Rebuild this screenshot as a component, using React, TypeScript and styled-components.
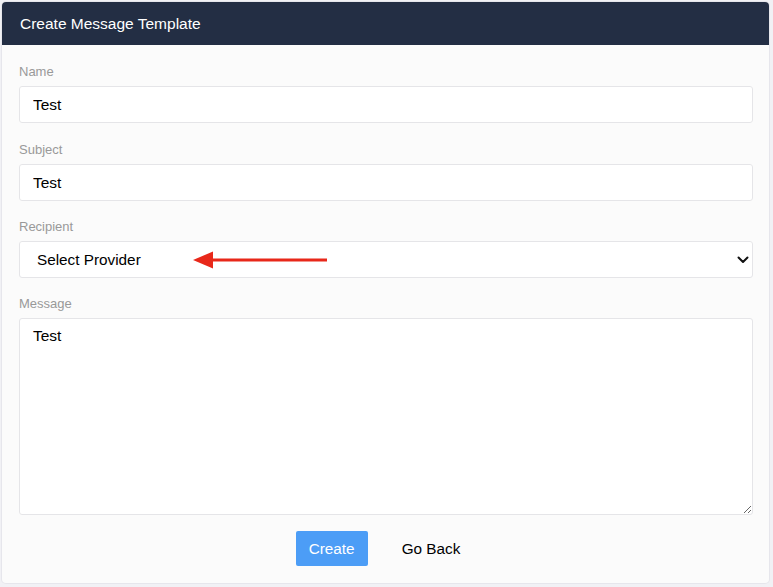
import React from 'react'
import styled, {createGlobalStyle} from 'styled-components'

const GlobalStyle = createGlobalStyle`
  body {
    margin: 0;
    background: #f1f1f5;
    font-family: "Liberation Sans", Arial, Helvetica, sans-serif;
  }
`

export default function App() {
  return (
    <Page>
      <GlobalStyle />
      <Card>
        <Header>Create Message Template</Header>
        <Form onSubmit={e => e.preventDefault()}>
          <Field $gap={19}>
            <Label>Name</Label>
            <Input defaultValue="Test" />
          </Field>
          <Field>
            <Label>Subject</Label>
            <Input defaultValue="Test" />
          </Field>
          <Field>
            <Label>Recipient</Label>
            <SelectWrap>
              <Select defaultValue="">
                <option value="">Select Provider</option>
              </Select>
              <Chevron width="12" height="8" viewBox="0 0 12 8">
                <path d="M1.5 1.5 L6 6 L10.5 1.5" fill="none" stroke="#111" strokeWidth="2" strokeLinecap="round" strokeLinejoin="round" />
              </Chevron>
              <Arrow width="136" height="20" viewBox="0 0 136 20">
                <path d="M18 10 H134" stroke="#e8281a" strokeWidth="3" />
                <path d="M0 10 L20 1.5 L20 18.5 Z" fill="#e8281a" />
              </Arrow>
            </SelectWrap>
          </Field>
          <Field $gap={16}>
            <Label>Message</Label>
            <TextArea defaultValue="Test" />
          </Field>
          <Actions>
            <Button $primary type="submit">Create</Button>
            <Button type="button">Go Back</Button>
          </Actions>
        </Form>
      </Card>
    </Page>
  )
}

const Page = styled.div`
  padding: 2px 4px 4px 2px;
`

const Card = styled.div`
  background: #fbfbfb;
  border-radius: 4px;
  overflow: hidden;
  box-shadow: 0 0 0 1px #e6e6ec;
`

const Header = styled.div`
  background: #232e44;
  color: #fff;
  height: 43px;
  display: flex;
  align-items: center;
  padding: 0 18px;
  font-size: 15.5px;
  font-weight: 500;
`

const Form = styled.form`
  display: flex;
  flex-direction: column;
  padding: 19px 16px 17px 17px;
`

const Field = styled.div<{$gap?: number}>`
  display: flex;
  flex-direction: column;
  margin-bottom: ${p => p.$gap ?? 18}px;
`

const Label = styled.label`
  font-size: 13px;
  line-height: 16px;
  color: #999;
  margin-bottom: 6px;
`

const Input = styled.input`
  box-sizing: border-box;
  height: 37px;
  border: 1px solid #e5e5e8;
  border-radius: 3px;
  background: #fff;
  padding: 0 13px;
  font-family: inherit;
  font-size: 15.5px;
  color: #000;
  outline: none;
`

const SelectWrap = styled.div`
  position: relative;
`

const Select = styled.select`
  box-sizing: border-box;
  width: 100%;
  height: 37px;
  border: 1px solid #e5e5e8;
  border-radius: 3px;
  background: #fff;
  padding: 0 17px;
  font-family: inherit;
  font-size: 15.3px;
  color: #000;
  appearance: none;
  outline: none;
`

const Chevron = styled.svg`
  position: absolute;
  right: 4px;
  top: 15px;
  pointer-events: none;
`

const Arrow = styled.svg`
  position: absolute;
  left: 174px;
  top: 9px;
  pointer-events: none;
`

const TextArea = styled.textarea`
  box-sizing: border-box;
  height: 197px;
  border: 1px solid #e5e5e8;
  border-radius: 3px;
  background: #fff;
  padding: 8px 13px;
  font-family: inherit;
  font-size: 15.5px;
  color: #000;
  outline: none;
  resize: vertical;
`

const Actions = styled.div`
  display: flex;
  justify-content: center;
  gap: 18px;
`

const Button = styled.button<{$primary?: boolean}>`
  height: 35px;
  padding: 0 ${p => (p.$primary ? '13px' : '16px')};
  border: none;
  border-radius: 2px;
  background: ${p => (p.$primary ? '#4c9df6' : 'transparent')};
  color: ${p => (p.$primary ? '#fff' : '#000')};
  font-family: inherit;
  font-size: 15.3px;
  cursor: pointer;
`
